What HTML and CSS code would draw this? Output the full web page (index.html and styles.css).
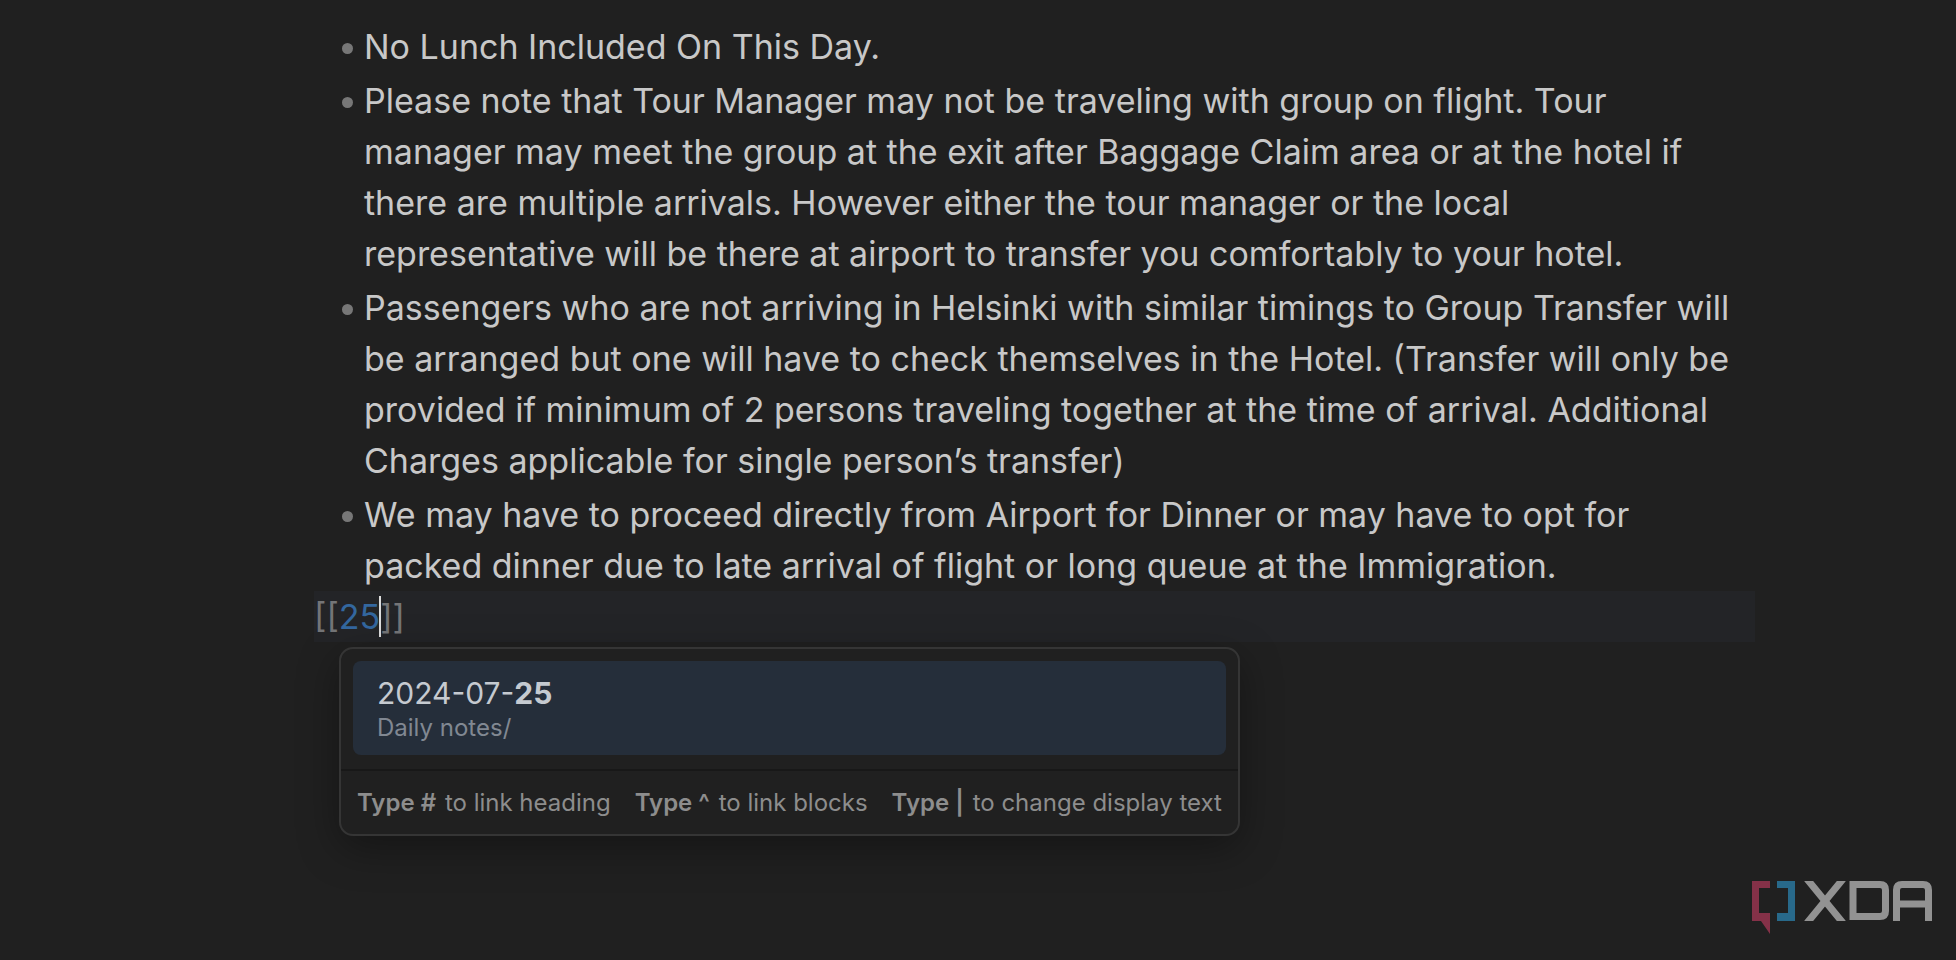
FILE: index.html
```html
<!DOCTYPE html>
<html lang="en">
<head>
<meta charset="utf-8">
<title>Tour notes</title>
<link rel="stylesheet" href="styles.css">
</head>
<body>
<main class="editor">
  <ul class="notes">
    <li class="note">No Lunch Included On This Day.</li>
    <li class="note">Please note that Tour Manager may not be traveling with group on flight. Tour manager may meet the group at the exit after Baggage Claim area or at the hotel if there are multiple arrivals. However either the tour manager or the local representative will be there at airport to transfer you comfortably to your hotel.</li>
    <li class="note">Passengers who are not arriving in Helsinki with similar timings to Group Transfer will be arranged but one will have to check themselves in the Hotel. (Transfer will only be provided if minimum of 2 persons traveling together at the time of arrival. Additional Charges applicable for single person’s transfer)</li>
    <li class="note">We may have to proceed directly from Airport for Dinner or may have to opt for packed dinner due to late arrival of flight or long queue at the Immigration.</li>
  </ul>
  <div class="active-line">
    <span class="bracket">[[</span><a class="link" href="#25">25</a><span class="caret"></span><span class="bracket">]]</span>
    <div class="suggest">
      <div class="suggest-list">
        <button class="suggest-item" type="button">
          <span class="suggest-title">2024-07-<b>25</b></span>
          <span class="suggest-path">Daily notes/</span>
        </button>
      </div>
      <div class="hints">
        <span><b>Type #</b> to link heading</span>
        <span><b>Type ^</b> to link blocks</span>
        <span><b>Type |</b> to change display text</span>
      </div>
    </div>
  </div>
</main>
<svg class="logo" width="182" height="54" viewBox="0 0 182 54" role="img" aria-label="XDA">
  <path fill="#853148" d="M0 0H18V7H7V32H18V53L9 40H0Z"/>
  <path fill="#28698a" d="M25 0H43V40H25V32H36V7H25Z"/>
  <g fill="none" stroke="#929292" stroke-width="7">
    <path d="M55 -2L91 42M91 -2L55 42" clip-path="url(#row)"/>
    <path d="M101 3.500H128Q133.500 3.500 133.500 9V30Q133.500 35.500 128 35.500H101Z"/>
    <path d="M144.500 40V9Q144.500 3.500 150 3.500H171Q176.500 3.500 176.500 9V40M144.500 23H176.500"/>
  </g>
  <clipPath id="row"><path d="M50 0H96V40H50Z"/></clipPath>
</svg>
</body>
</html>
```
FILE: styles.css
```css
* {
  box-sizing: border-box;
}

body {
  margin: 0;
  min-height: 100vh;
  position: relative;
  background: #202020;
  color: #c8c8c8;
  font-family: Inter, "Liberation Sans", sans-serif;
  font-size: 34px;
  line-height: 51px;
}

.editor {
  padding: 18px 201px 0 314px;
}

.notes {
  list-style: none;
  margin: 0;
  padding: 0 12px 0 50px;
}

.note {
  position: relative;
  padding-top: 3px;
}

.note::before {
  content: "";
  position: absolute;
  left: -22px;
  top: 25px;
  width: 11px;
  height: 11px;
  border-radius: 50%;
  background: #777777;
}

.active-line {
  position: relative;
  background: #232427;
}

.bracket {
  color: #747577;
}

.link {
  color: #33679f;
  text-decoration: none;
}

.caret {
  display: inline-block;
  width: 2px;
  height: 41px;
  margin: 0 -1px;
  vertical-align: -8px;
  background: #dddddd;
}

.suggest {
  position: absolute;
  top: 56px;
  left: 25px;
  border: 2px solid #353535;
  border-radius: 14px;
  background: #202020;
  box-shadow: 0 12px 40px rgba(0, 0, 0, 0.35);
  overflow: hidden;
}

.suggest-list {
  padding: 12px 12px 14px;
}

.suggest-item {
  display: flex;
  flex-direction: column;
  width: 100%;
  padding: 12px 24px;
  border: 0;
  border-radius: 8px;
  background: #252e3a;
  color: #c5cad0;
  font: inherit;
  text-align: left;
}

.suggest-title {
  font-size: 30px;
  line-height: 40px;
}

.suggest-path {
  color: #818892;
  font-size: 24px;
  line-height: 30px;
}

.hints {
  display: flex;
  gap: 24px;
  padding: 16px;
  border-top: 2px solid #181818;
  color: #8d8d8d;
  font-size: 24px;
  line-height: 31px;
  white-space: nowrap;
}

.hints b {
  margin-right: 2px;
  font-weight: 600;
}

.logo {
  position: absolute;
  right: 22px;
  bottom: 25px;
}
```
